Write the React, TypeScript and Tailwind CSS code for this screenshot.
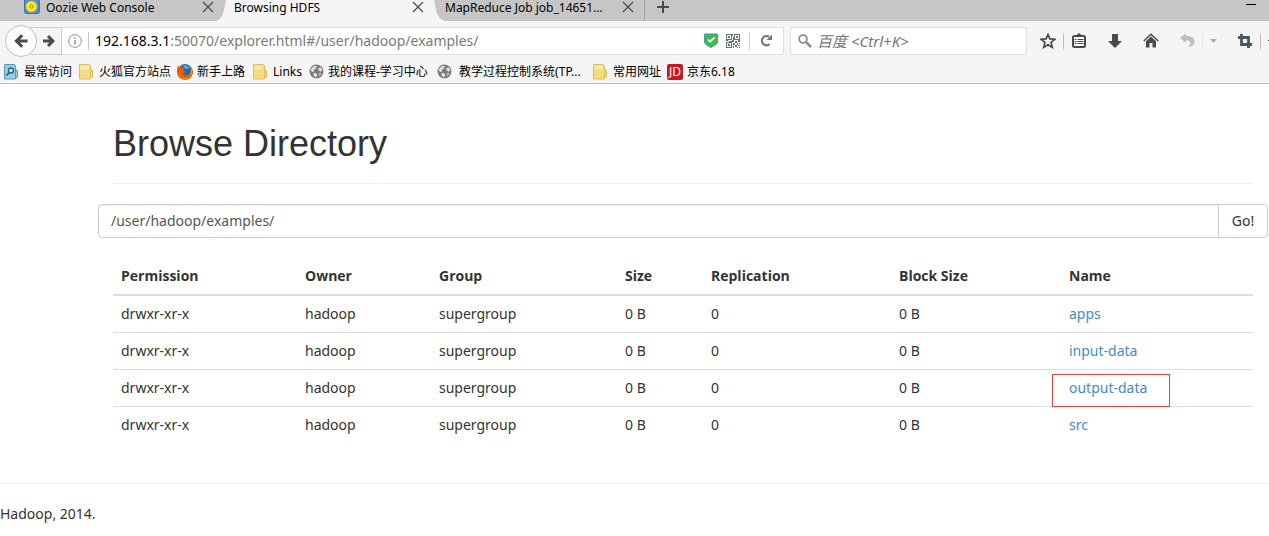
import type { ReactNode } from 'react';

type Bookmark = {
  label: string;
  icon: ReactNode;
  width: string;
};

const CloseIcon = () => (
  <svg width="12" height="12" viewBox="0 0 12 12" fill="none" stroke="#4a4a4a" strokeWidth="1.2">
    <path d="M1 1l10 10M11 1L1 11" />
  </svg>
);

const OozieIcon = () => (
  <svg width="16" height="16" viewBox="0 0 16 16">
    <rect x="0.5" y="-1" width="15" height="14.5" rx="2" fill="#4b8be6" stroke="#3a6fc4" />
    <circle cx="7.5" cy="6.5" r="5.5" fill="#ffee00" stroke="#d8c000" strokeWidth="0.6" />
    <circle cx="7.5" cy="6.5" r="1.5" fill="#fff" stroke="#555" strokeWidth="0.9" />
  </svg>
);

const FolderIcon = () => (
  <svg width="16" height="16" viewBox="0 0 16 16">
    <path d="M10 6h3l.5 1v6l-1 1H10z" fill="#f0da86" stroke="#d9bb52" />
    <path d="M.5.5h9.500l1.500 1v13.500H.5z" fill="#f1dc84" stroke="#dcc05c" />
    <path d="M1.500 1.500h8.500v4h-8.500z" fill="#f8eaae" />
  </svg>
);

const MostVisitedIcon = () => (
  <svg width="16" height="16" viewBox="0 0 16 16">
    <path d="M10 6h3l.5 1v6l-1 1H10z" fill="#9ccbe6" stroke="#5b9abf" />
    <path d="M.5.5h9.500l1.500 1v13.500H.5z" fill="#9ccbe6" stroke="#5b9abf" />
    <circle cx="7" cy="6.500" r="2.500" fill="#d9eef8" stroke="#2f6287" strokeWidth="1.400" />
    <path d="M5.200 8.400L2.400 11.800" stroke="#2f6287" strokeWidth="1.800" />
  </svg>
);

const FirefoxIcon = () => (
  <svg width="16" height="16" viewBox="0 0 16 16">
    <circle cx="8" cy="7" r="7" fill="#2467ad" />
    <path d="M6 1.500c3-1 6 .5 7 3-2-.5-4 1-5 .5z" fill="#5aa9e0" />
    <path
      d="M1.200 1.200C.2 3 0 6 0 8c0 4.400 3.600 8 8 8s8-3.600 8-8c0-2-.8-4-2-5 .5 2 .5 3.500-.2 5-1 2.200-2.800 3.300-5 3.200-2-.1-3.300-1.200-3.600-2.400 1 .5 2 .3 3-.6.5-.4 0-.9-.6-.9-1.200 0-1.800-.6-1.600-1.300l1.600-1.200c0-.5-1.300-.6-2-.7C5 3 5.500 2.300 6.200 1.600 4.800 1.700 3.800 2.300 3 3.200c-.8 0-1.400-.4-1.800-2z"
      fill="#e66000"
    />
    <path d="M13.800 4c1.800 3 1.200 6.500-1 8.500 1-2.500 1.300-5.500 1-8.500z" fill="#ffb11b" />
    <path d="M1 9.500c1 3 4 4.500 7 4.500 2 0 4-.5 5.500-2-1 2-3 3.300-5.500 3.300-3.500 0-6.500-2.300-7-5.800z" fill="#f58a1d" />
  </svg>
);

const GlobeIcon = () => (
  <svg width="15" height="15" viewBox="0 0 16 16">
    <circle cx="8" cy="8" r="7.400" fill="#7d7d7d" />
    <path d="M2.500 4.500L6 2l2.500.5-1 2L5 6l.5 2-2 .5L2 7z" fill="#e2e2e2" />
    <path d="M9.500 5l3-1.500 1.800 3.500-1.500 1-2-.5z" fill="#e2e2e2" />
    <path d="M5 9.500l3 .5 1 2-2 2.500L5 12z" fill="#e2e2e2" />
    <path d="M10.500 10l2.500-.5-1.500 3.300z" fill="#e2e2e2" />
  </svg>
);

const JdIcon = () => (
  <span className="flex h-4 w-4 items-center justify-center rounded-xs bg-[#c81623] text-xs leading-4 text-white">
    JD
  </span>
);

const BackIcon = () => (
  <svg width="14" height="14" viewBox="0 0 14 14" fill="none" stroke="#4a4a4a" strokeWidth="3">
    <path d="M13.500 7H3M8.200 1.200L2.400 7l5.800 5.800" />
  </svg>
);

const ForwardIcon = () => (
  <svg width="12" height="12" viewBox="0 0 14 14" fill="none" stroke="#4a4a4a" strokeWidth="3.400">
    <path d="M0 7H11M5.800 1.200L11.600 7l-5.800 5.800" />
  </svg>
);

const InfoIcon = () => (
  <svg width="14" height="14" viewBox="0 0 14 14" fill="none" stroke="#8f8f8f">
    <circle cx="7" cy="7" r="6.300" />
    <path d="M7 6v4.500M7 3.200v1.600" strokeWidth="1.500" />
  </svg>
);

const ShieldIcon = () => (
  <svg width="14" height="15" viewBox="0 0 14 15">
    <path d="M.5 1h13v8C13.500 11.500 9 13 7 14.500 5 13 .5 11.500 .5 9z" fill="#43b84b" stroke="#35a0b4" />
    <path d="M3.800 6.300l2.400 2.400 4.300-4.400" fill="none" stroke="#fff" strokeWidth="1.800" />
  </svg>
);

const QrIcon = () => (
  <svg width="14" height="14" viewBox="0 0 14 14" fill="none" stroke="#6b6f76" shapeRendering="crispEdges">
    <path d="M.5.5h5v5h-5zM8.500.5h5v5h-5zM.5 8.500h5v5h-5z" />
    <path
      d="M2 2h2v2H2zM10 2h2v2h-2zM2 10h2v2H2zM6 0h1v2H6zM7 3h1v3H7zM0 6h2v1H0zM3 7h3v1H3zM6 6h2v2H6zM9 7h2v2H9zM12 6h2v2h-2zM7 9h2v2H7zM11 9h1v2h-1zM13 9h1v1h-1zM9 11h2v2H9zM12 11h2v1h-2zM7 12h1v2H7zM11 13h1v1h-1zM13 13h1v1h-1z"
      fill="#6b6f76"
      stroke="none"
    />
  </svg>
);

const ReloadIcon = () => (
  <svg width="13" height="13" viewBox="0 0 13 13">
    <path d="M9.500 10.200A4.600 4.600 0 1 1 9 2.800" fill="none" stroke="#757575" strokeWidth="2.200" />
    <path d="M12 .5v5.500H6.500z" fill="#757575" />
  </svg>
);

const SearchIcon = () => (
  <svg width="14" height="14" viewBox="0 0 14 14" fill="none" stroke="#8f8f8f">
    <circle cx="5" cy="5" r="3.900" strokeWidth="1.800" />
    <path d="M8 8l5 5" strokeWidth="2.500" />
  </svg>
);

const StarIcon = () => (
  <svg width="16" height="16" viewBox="0 0 16 16">
    <path
      d="M8 1.500l1.900 4.400 4.900.4-3.700 3.100 1.200 4.900L8 11.700l-4.300 2.600 1.200-4.900L1.200 6.300l4.900-.4z"
      fill="none"
      stroke="#4a4a4a"
      strokeWidth="1.700"
    />
  </svg>
);

const ClipboardIcon = () => (
  <svg width="14" height="16" viewBox="0 0 14 16">
    <path d="M3.500 3L7 0l3.500 3z" fill="#4a4a4a" />
    <rect x="1" y="3" width="12" height="11" rx="1.500" fill="#fff" stroke="#4a4a4a" strokeWidth="2" />
    <path d="M2.500 6.500h2M2.500 8.500h2M2.500 10.500h2M5.500 6.500h6M5.500 8.500h6M5.500 10.500h6" stroke="#4a4a4a" />
  </svg>
);

const DownloadIcon = () => (
  <svg width="14" height="14" viewBox="0 0 14 14" fill="#4a4a4a">
    <path d="M4 0h6v7h4l-7 7-7-7h4z" />
  </svg>
);

const HomeIcon = () => (
  <svg width="16" height="15" viewBox="0 0 16 15">
    <path d="M.8 8L8 1.200 15.200 8" fill="none" stroke="#4a4a4a" strokeWidth="1.500" />
    <path d="M8 3.500L13 8.200V14.500H9.500V10h-3v4.500H3V8.200z" fill="#4a4a4a" />
  </svg>
);

const UndoIcon = () => (
  <svg width="15" height="15" viewBox="0 0 15 15" fill="#b9bfc5">
    <path d="M6 0L0 5l6 5V7.200c3 0 4.800 1.300 4.300 3.600-.3 1.400-1.300 2.400-2.500 3.200C11.500 14 14.500 12 14.500 8.500 14.500 5 11 2.800 6 2.800z" />
  </svg>
);

const CropIcon = () => (
  <svg width="14" height="14" viewBox="0 0 14 14" fill="none" stroke="#46566a" strokeWidth="2.800">
    <path d="M3.500 0v10.500H14M0 3.500h10.500V14" />
  </svg>
);

const bookmarks: Bookmark[] = [
  { label: '最常访问', icon: <MostVisitedIcon />, width: 'w-[75px]' },
  { label: '火狐官方站点', icon: <FolderIcon />, width: 'w-[98px]' },
  { label: '新手上路', icon: <FirefoxIcon />, width: 'w-[76px]' },
  { label: 'Links', icon: <FolderIcon />, width: 'w-[56px]' },
  { label: '我的课程-学习中心', icon: <GlobeIcon />, width: 'w-[128px]' },
  { label: '\u00a0教学过程控制系统(TP...', icon: <GlobeIcon />, width: 'w-[156px]' },
  { label: '常用网址', icon: <FolderIcon />, width: 'w-[74px]' },
  { label: '京东6.18', icon: <JdIcon />, width: 'w-[80px]' },
];

const columns = [
  { name: 'Permission', width: 'w-[184px]' },
  { name: 'Owner', width: 'w-[134px]' },
  { name: 'Group', width: 'w-[186px]' },
  { name: 'Size', width: 'w-[86px]' },
  { name: 'Replication', width: 'w-[188px]' },
  { name: 'Block Size', width: 'w-[170px]' },
  { name: 'Name', width: '' },
];

const files = [
  { name: 'apps', marked: false },
  { name: 'input-data', marked: false },
  { name: 'output-data', marked: true },
  { name: 'src', marked: false },
];

const TabBar = () => (
  <div className="flex h-[21px] bg-[#c6c6c6] text-xs leading-4 text-black">
    <div className="flex w-[216px] shrink-0 items-start pl-6">
      <OozieIcon />
      <span className="ml-1.5 flex-1 whitespace-nowrap">Oozie Web Console</span>
      <button aria-label="Close Oozie Web Console" className="mt-px mr-0.5">
        <CloseIcon />
      </button>
    </div>
    <svg className="shrink-0" width="12" height="21" viewBox="0 0 12 21" fill="#f5f5f5">
      <path d="M12 0H10C8 8 8 19 0 21h12z" />
    </svg>
    <div className="flex w-[205px] shrink-0 items-start bg-[#f5f5f5] pl-1.5">
      <span className="flex-1 whitespace-nowrap">Browsing HDFS</span>
      <button aria-label="Close Browsing HDFS" className="mt-px mr-[9px]">
        <CloseIcon />
      </button>
    </div>
    <svg className="shrink-0" width="12" height="21" viewBox="0 0 12 21" fill="#f5f5f5">
      <path d="M0 0h1c2 8 2 19 11 21H0z" />
    </svg>
    <div className="flex w-[200px] shrink-0 items-start border-r border-[#a3a3a3]">
      <span className="flex-1 whitespace-nowrap">MapReduce Job job_14651...</span>
      <button aria-label="Close MapReduce Job" className="mt-px mr-2.5">
        <CloseIcon />
      </button>
    </div>
    <button aria-label="New tab" className="ml-3 flex items-start">
      <svg width="12" height="13" viewBox="0 0 12 13" stroke="#4a4a4a" strokeWidth="2">
        <path d="M6 1v12M0 7h12" />
      </svg>
    </button>
    <button aria-label="Minimize" className="mr-[13px] ml-auto flex items-start pt-1">
      <span className="h-px w-2.5 bg-black" />
    </button>
  </div>
);

const Toolbar = () => (
  <div className="flex h-[39px] items-center bg-[#f5f5f5] pl-[5px]">
    <button
      aria-label="Back"
      className="z-10 flex h-8 w-8 shrink-0 items-center justify-center rounded-full border border-[#c2c2c2] bg-[#fbfbfb]"
    >
      <BackIcon />
    </button>
    <button
      aria-label="Forward"
      className="-ml-2 flex h-7 w-[33px] shrink-0 items-center justify-end border border-[#cdcdcd] pr-1.5"
    >
      <ForwardIcon />
    </button>
    <div className="flex h-7 min-w-0 flex-1 items-center border border-l-0 border-[#e0e0e0] bg-white pr-2.5 pl-1.5">
      <InfoIcon />
      <span className="mr-1.5 ml-1.5 h-[18px] w-px bg-[#c8c8c8]" />
      <div className="flex-1 text-sm whitespace-nowrap text-[#7a7a7a]">
        <span className="text-black">192.168.3.1</span>:50070/explorer.html#/user/hadoop/examples/
      </div>
      <button aria-label="Site security">
        <ShieldIcon />
      </button>
      <button aria-label="QR code" className="ml-2">
        <QrIcon />
      </button>
      <span className="mr-2.5 ml-[9px] h-[18px] w-px bg-[#d0d0d0]" />
      <button aria-label="Reload">
        <ReloadIcon />
      </button>
    </div>
    <label className="ml-1.5 flex h-7 w-[237px] shrink-0 items-center border border-[#e0e0e0] bg-white pl-[7px]">
      <SearchIcon />
      <input
        type="text"
        aria-label="Search"
        placeholder="百度 <Ctrl+K>"
        className="ml-[5px] min-w-0 flex-1 text-[15px] italic outline-none placeholder:text-[#757575]"
      />
    </label>
    <div className="flex w-[242px] shrink-0 items-center pl-[13px]">
      <button aria-label="Bookmark this page">
        <StarIcon />
      </button>
      <span className="mr-2 ml-[7px] h-4 w-px bg-[#bdbdbd]" />
      <button aria-label="Bookmarks">
        <ClipboardIcon />
      </button>
      <button aria-label="Downloads" className="ml-[22px]">
        <DownloadIcon />
      </button>
      <button aria-label="Home" className="ml-[21px]">
        <HomeIcon />
      </button>
      <button aria-label="Undo" className="ml-[21px]">
        <UndoIcon />
      </button>
      <span className="mr-[7px] ml-[7px] h-4 w-px bg-[#e6e6e6]" />
      <button aria-label="Undo list">
        <svg width="7" height="4" viewBox="0 0 7 4" fill="#ababab">
          <path d="M0 0h7L3.500 4z" />
        </svg>
      </button>
      <button aria-label="Screenshot" className="ml-[21px]">
        <CropIcon />
      </button>
      <span className="ml-2 h-4 w-px bg-[#bdbdbd]" />
      <span className="ml-[7px] h-px w-px bg-[#4a4a4a]" />
    </div>
  </div>
);

const BookmarksBar = () => (
  <nav className="flex h-6 items-center border-b border-[#bcbcbc] bg-[#f5f5f5] pl-1 text-xs text-black">
    {bookmarks.map((bookmark) => (
      <a key={bookmark.label} href="#" className={`flex shrink-0 items-center gap-1 whitespace-nowrap ${bookmark.width}`}>
        {bookmark.icon}
        {bookmark.label}
      </a>
    ))}
  </nav>
);

const FileTable = () => (
  <table className="mt-5 w-full table-fixed text-left">
    <thead>
      <tr className="border-b-2 border-[#ddd] font-['Open_Sans',sans-serif]">
        {columns.map((column) => (
          <th key={column.name} className={`p-2 font-bold ${column.width}`}>
            {column.name}
          </th>
        ))}
      </tr>
    </thead>
    <tbody>
      {files.map((file) => (
        <tr key={file.name} className="border-b border-[#ddd] last:border-b-0">
          <td className="p-2">drwxr-xr-x</td>
          <td className="p-2">hadoop</td>
          <td className="p-2">supergroup</td>
          <td className="p-2">0 B</td>
          <td className="p-2">0</td>
          <td className="p-2">0 B</td>
          <td className="p-2">
            <div className="relative w-fit">
              <a href="#" className="text-[#428bca]">
                {file.name}
              </a>
              {file.marked && (
                <span className="pointer-events-none absolute -top-1 -left-[17px] h-[33px] w-[118px] border border-[#f03c3c]" />
              )}
            </div>
          </td>
        </tr>
      ))}
    </tbody>
  </table>
);

const App = () => (
  <div className="bg-white font-['Noto_Sans','Noto_Sans_CJK_SC',sans-serif] text-sm leading-5 text-[#333]">
    <TabBar />
    <Toolbar />
    <BookmarksBar />

    <main className="pr-4 pl-[113px]">
      <h1 className="border-b border-[#eee] pt-10 pb-5 font-['Liberation_Sans',Arial,sans-serif] text-4xl leading-[39px]">
        Browse Directory
      </h1>
      <form className="-mx-[15px] mt-5 flex h-[34px]" onSubmit={(e) => e.preventDefault()}>
        <input
          type="text"
          aria-label="Directory"
          defaultValue="/user/hadoop/examples/"
          className="min-w-0 flex-1 rounded-l-sm border border-[#ccc] px-3 text-[#555] shadow-[inset_0_1px_1px_rgba(0,0,0,0.075)] outline-none"
        />
        <button type="submit" className="-ml-px w-[50px] rounded-r-sm border border-[#ccc] bg-white">
          Go!
        </button>
      </form>
      <FileTable />
    </main>

    <footer className="mt-10 border-t border-[#eee] pt-5">
      <p>Hadoop, 2014.</p>
    </footer>
  </div>
);

export default App;
